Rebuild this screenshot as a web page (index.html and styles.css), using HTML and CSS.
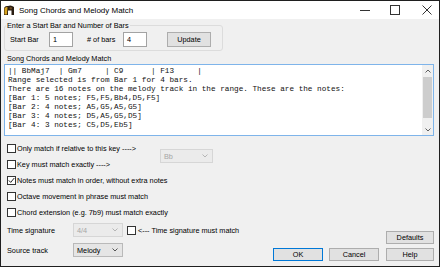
FILE: index.html
```html
<!DOCTYPE html>
<html>
<head>
<meta charset="utf-8">
<link rel="stylesheet" href="styles.css">
</head>
<body>
<div class="window">
  <div class="titlebar">
    <svg class="app-icon" viewBox="0 0 12 12" width="12" height="12">
      <path d="M1 11 L1 4 Q2 1.5 5 2 Q8 0.5 11 3 L11 11 L8.5 11 L8.5 6.5 L5 6.5 L5 11 Z" fill="#2a1d12"/>
      <path d="M1.5 4.5 Q2.5 2.5 4.5 3 L4 10.5 L1.5 10.5 Z" fill="#d9a521"/>
      <circle cx="7.8" cy="4.3" r="1.2" fill="#6b4a22"/>
    </svg>
    <span class="title">Song Chords and Melody Match</span>
    <div class="controls">
      <span class="ctl"><svg width="10" height="10" viewBox="0 0 10 10"><line x1="0" y1="5.5" x2="10" y2="5.5" stroke="#333" stroke-width="1"/></svg></span>
      <span class="ctl"><svg width="10" height="10" viewBox="0 0 10 10"><rect x="0.5" y="0.5" width="9" height="9" fill="none" stroke="#333" stroke-width="1"/></svg></span>
      <span class="ctl ctl-close"><svg width="10" height="10" viewBox="0 0 10 10"><path d="M0.5 0.5 L9.5 9.5 M9.5 0.5 L0.5 9.5" stroke="#333" stroke-width="1"/></svg></span>
    </div>
  </div>

  <div class="content">
    <fieldset class="group">
      <legend>Enter a Start Bar and Number of Bars</legend>
      <div class="bar-row">
        <span class="lbl-start">Start Bar</span>
        <span class="edit">1</span>
        <span class="lbl-num"># of bars</span>
        <span class="edit">4</span>
        <span class="btn btn-update">Update</span>
      </div>
    </fieldset>

    <div class="section-label">Song Chords and Melody Match</div>
    <div class="memo">
<pre class="memo-text">|| BbMaj7  | Gm7     | C9      | F13     |
Range selected is from Bar 1 for 4 bars.
There are 16 notes on the melody track in the range. These are the notes:
[Bar 1: 5 notes; F5,F5,Bb4,D5,F5]
[Bar 2: 4 notes; A5,G5,A5,G5]
[Bar 3: 4 notes; D5,A5,G5,D5]
[Bar 4: 3 notes; C5,D5,Eb5]</pre>
      <div class="vscroll">
        <span class="sb-btn"><svg width="6" height="4" viewBox="0 0 6 4"><path d="M0.5 3.5 L3 1 L5.5 3.5" fill="none" stroke="#606060" stroke-width="1"/></svg></span>
        <span class="sb-thumb"></span>
        <span class="sb-track"></span>
        <span class="sb-btn"><svg width="6" height="4" viewBox="0 0 6 4"><path d="M0.5 0.5 L3 3 L5.5 0.5" fill="none" stroke="#606060" stroke-width="1"/></svg></span>
      </div>
    </div>

    <div class="options">
      <div class="chk-row"><span class="box"></span><span>Only match if relative to this key ----&gt;</span></div>
      <div class="combo combo-disabled combo-bb"><span>Bb</span><svg width="6" height="4" viewBox="0 0 6 4"><path d="M0.5 0.5 L3 3 L5.5 0.5" fill="none" stroke="#b5b5b5" stroke-width="1"/></svg></div>
      <div class="chk-row"><span class="box"></span><span>Key must match exactly ----&gt;</span></div>
      <div class="chk-row wide"><span class="box"><svg width="7" height="7" viewBox="0 0 7 7"><path d="M0.8 3.4 L2.7 5.4 L6.3 1" fill="none" stroke="#222" stroke-width="1"/></svg></span><span>Notes must match in order, without extra notes</span></div>
      <div class="chk-row wide"><span class="box"></span><span>Octave movement in phrase must match</span></div>
      <div class="chk-row wide"><span class="box"></span><span>Chord extension (e.g. 7b9) must match exactly</span></div>
    </div>

    <div class="bottom">
      <div class="bottom-left">
        <div class="field-row">
          <span class="field-label">Time signature</span>
          <div class="combo combo-disabled"><span>4/4</span><svg width="6" height="4" viewBox="0 0 6 4"><path d="M0.5 0.5 L3 3 L5.5 0.5" fill="none" stroke="#b5b5b5" stroke-width="1"/></svg></div>
          <span class="box box-ts"></span><span class="ts-text">&lt;--- Time signature must match</span>
        </div>
        <div class="field-row">
          <span class="field-label">Source track</span>
          <div class="combo"><span>Melody</span><svg width="6" height="4" viewBox="0 0 6 4"><path d="M0.5 0.5 L3 3 L5.5 0.5" fill="none" stroke="#555" stroke-width="1"/></svg></div>
        </div>
      </div>
      <div class="bottom-right">
        <span class="btn btn-defaults">Defaults</span>
        <div class="btn-row">
          <span class="btn btn-ok">OK</span>
          <span class="btn btn-cancel">Cancel</span>
          <span class="btn btn-help">Help</span>
        </div>
      </div>
    </div>
  </div>
</div>
</body>
</html>
```

FILE: styles.css
```css
html, body {
  margin: 0;
  padding: 0;
}

body {
  font-family: "Liberation Sans", Arial, sans-serif;
  font-size: 7.3px;
  color: #000;
  background: #fff;
}

.window {
  width: 440px;
  height: 267px;
  box-sizing: border-box;
  border: 1px solid #1f1f1f;
  background: #f0f0f0;
  display: flex;
  flex-direction: column;
  overflow: hidden;
}

/* title bar */
.titlebar {
  height: 18px;
  flex: 0 0 18px;
  background: #fff;
  display: flex;
  align-items: center;
}

.app-icon {
  margin-left: 2px;
  display: block;
}

.title {
  margin-left: 4px;
  font-size: 8px;
  color: #000;
}

.controls {
  margin-left: auto;
  display: flex;
  height: 100%;
}

.ctl {
  width: 30px;
  display: flex;
  align-items: center;
  justify-content: center;
}

.ctl svg {
  display: block;
}

.ctl-close {
  width: 29px;
  box-sizing: border-box;
  padding-left: 5px;
}

/* content */
.content {
  flex: 1;
  padding: 2px 5px 0 3px;
  display: flex;
  flex-direction: column;
}

.group {
  margin: 0;
  width: 219px;
  min-width: 0;
  box-sizing: border-box;
  border: 1px solid #dcdcdc;
  border-radius: 3px;
  padding: 0 0 3px 1px;
}

.group legend {
  padding: 0 1px;
  line-height: 9px;
}

.bar-row {
  display: flex;
  align-items: center;
  height: 16px;
  margin-top: 1px;
  padding-left: 4px;
}

.lbl-start {
  width: 39px;
}

.lbl-num {
  margin-left: 14px;
  width: 36px;
}

.edit {
  width: 24px;
  height: 15px;
  box-sizing: border-box;
  background: #fff;
  border: 1px solid #a3a3a3;
  padding-left: 3px;
  line-height: 13px;
}

.btn {
  box-sizing: border-box;
  background: #e1e1e1;
  border: 1px solid #adadad;
  display: flex;
  align-items: center;
  justify-content: center;
}

.btn-update {
  margin-left: 20px;
  width: 44px;
  height: 15px;
}

.section-label {
  margin-top: 3px;
  line-height: 9px;
  padding-left: 3px;
}

/* memo */
.memo {
  margin-top: 1px;
  height: 72px;
  box-sizing: border-box;
  border: 1px solid #7eb4ea;
  background: #fff;
  display: flex;
}

.memo-text {
  flex: 1;
  margin: 0;
  padding: 2px 0 0 3px;
  font-family: "Liberation Mono", "Courier New", monospace;
  font-size: 7.7px;
  line-height: 9px;
  color: #111;
  white-space: pre;
  overflow: hidden;
}

.vscroll {
  width: 11px;
  background: #f0f0f0;
  display: flex;
  flex-direction: column;
  align-items: center;
}

.sb-btn {
  height: 11px;
  width: 11px;
  display: flex;
  align-items: center;
  justify-content: center;
}

.sb-btn svg {
  display: block;
}

.sb-thumb {
  margin-top: 1px;
  width: 9px;
  height: 41px;
  background: #cdcdcd;
}

.sb-track {
  flex: 1;
}

/* options */
.options {
  margin-top: 4px;
  display: grid;
  grid-template-columns: 153px 53px;
  grid-auto-rows: 16px;
  padding-left: 3px;
}

.chk-row {
  display: flex;
  align-items: center;
  grid-column: 1;
  white-space: nowrap;
}

.chk-row.wide {
  grid-column: 1 / 3;
}

.box {
  width: 9px;
  height: 9px;
  box-sizing: border-box;
  border: 1px solid #333;
  background: #fff;
  margin-right: 1px;
  display: flex;
  align-items: center;
  justify-content: center;
  flex: 0 0 9px;
}

.box svg {
  display: block;
}

.combo {
  width: 50px;
  height: 14px;
  box-sizing: border-box;
  border: 1px solid #b9b9b9;
  background: #e5e5e5;
  display: flex;
  align-items: center;
  justify-content: space-between;
  padding: 0 4px 0 3px;
}

.combo svg {
  display: block;
}

.combo-disabled {
  color: #a6a6a6;
  background: #ebebeb;
  border-color: #d6d6d6;
}

.combo-bb {
  grid-column: 2;
  grid-row: 1 / span 2;
  align-self: center;
  width: 53px;
}

/* bottom */
.bottom {
  margin-top: 2px;
  display: flex;
}

.bottom-left {
  display: flex;
  flex-direction: column;
  gap: 4px;
  padding-left: 3px;
}

.field-row {
  display: flex;
  align-items: center;
  height: 16px;
  white-space: nowrap;
}

.field-label {
  width: 66px;
}

.box-ts {
  margin-left: 4px;
}

.ts-text {
  margin-left: 1px;
}

.bottom-right {
  margin-left: auto;
  display: flex;
  flex-direction: column;
  align-items: flex-end;
  padding-top: 9px;
  gap: 4px;
}

.btn-defaults {
  width: 48px;
  height: 13px;
}

.btn-row {
  display: flex;
  gap: 6px;
}

.btn-ok,
.btn-cancel {
  width: 50px;
  height: 13px;
}

.btn-ok {
  border-color: #0078d7;
}

.btn-help {
  margin-left: 1px;
  width: 48px;
  height: 13px;
}
```
